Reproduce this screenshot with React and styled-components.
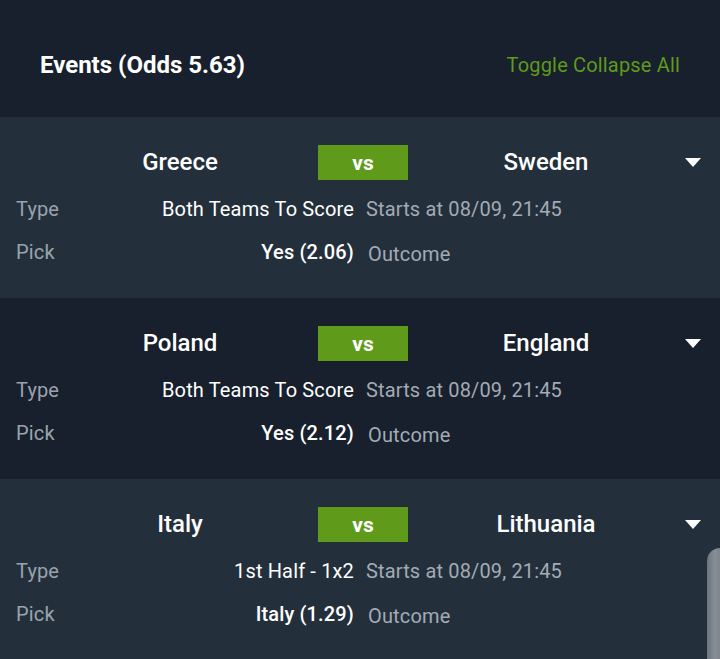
import React from 'react';
import styled, { createGlobalStyle } from 'styled-components';

const GlobalStyle = createGlobalStyle`
  html, body {
    margin: 0;
    padding: 0;
    background: #17202c;
    font-family: Roboto, "Liberation Sans", Arial, sans-serif;
    overflow: hidden;
  }
`;

const Page = styled.div`
  position: relative;
  width: 720px;
  height: 659px;
  overflow: hidden;
  background: #17202c;
`;

const Header = styled.div`
  height: 117px;
  display: flex;
  align-items: center;
  justify-content: space-between;
  padding: 12px 40px 0;
  box-sizing: border-box;
`;

const Title = styled.h2`
  margin: 0;
  color: #ffffff;
  font-size: 24px;
  font-weight: 700;
`;

const Toggle = styled.a`
  color: #5f9a1b;
  font-size: 20px;
  letter-spacing: 0.17px;
  cursor: pointer;
`;

const Card = styled.div`
  background: ${p => (p.$alt ? '#17202c' : '#23303c')};
  padding: 28px 0 35px;
`;

const Teams = styled.div`
  display: grid;
  grid-template-columns: 276px 90px 276px 20px;
  padding: 0 16px 0 42px;
  height: 35px;
  align-items: center;
`;

const Team = styled.div`
  color: #ffffff;
  font-size: 24px;
  font-weight: 500;
  text-align: center;
  margin-top: -2px;
`;

const Vs = styled.div`
  height: 35px;
  background: #5f9a1b;
  color: #ffffff;
  font-size: 21px;
  font-weight: 700;
  display: flex;
  align-items: center;
  justify-content: center;
`;

const Caret = styled.div`
  width: 0;
  height: 0;
  justify-self: center;
  margin-right: 3px;
  border-left: 8.5px solid transparent;
  border-right: 8.5px solid transparent;
  border-top: 9px solid #ffffff;
`;

const Details = styled.div`
  display: grid;
  grid-template-columns: 120px 206px 1fr;
  column-gap: 12px;
  row-gap: 21px;
  padding: 0 16px;
  margin-top: 18px;
  font-size: 20px;
  line-height: 22px;
  letter-spacing: 0.15px;
`;

const Label = styled.div`
  color: #9aa3ac;
`;

const Value = styled.div`
  color: #ffffff;
  text-align: right;
  white-space: nowrap;
  font-weight: ${p => (p.$strong ? 500 : 400)};
`;

const Info = styled.div`
  color: #a3abb4;
  white-space: nowrap;
  padding-left: ${p => (p.$shift ? '2px' : '0')};
  position: relative;
  top: ${p => (p.$shift ? '2px' : '0')};
`;

const FloatTab = styled.div`
  position: absolute;
  right: 0;
  top: 548px;
  width: 13px;
  height: 120px;
  border-top-left-radius: 14px;
  background: linear-gradient(90deg, #6c747e 0%, #868d96 60%, #7d848d 100%);
`;

const events = [
  { home: 'Greece', away: 'Sweden', type: 'Both Teams To Score', pick: 'Yes (2.06)' },
  { home: 'Poland', away: 'England', type: 'Both Teams To Score', pick: 'Yes (2.12)' },
  { home: 'Italy', away: 'Lithuania', type: '1st Half - 1x2', pick: 'Italy (1.29)' },
];

function EventCard({ ev, alt }) {
  return (
    <Card $alt={alt}>
      <Teams>
        <Team>{ev.home}</Team>
        <Vs>vs</Vs>
        <Team>{ev.away}</Team>
        <Caret />
      </Teams>
      <Details>
        <Label>Type</Label>
        <Value>{ev.type}</Value>
        <Info>Starts at 08/09, 21:45</Info>
        <Label>Pick</Label>
        <Value $strong>{ev.pick}</Value>
        <Info $shift>Outcome</Info>
      </Details>
    </Card>
  );
}

export default function App() {
  return (
    <Page>
      <GlobalStyle />
      <Header>
        <Title>Events (Odds 5.63)</Title>
        <Toggle>Toggle Collapse All</Toggle>
      </Header>
      {events.map((ev, i) => (
        <EventCard key={ev.home} ev={ev} alt={i % 2 === 1} />
      ))}
      <FloatTab />
    </Page>
  );
}
